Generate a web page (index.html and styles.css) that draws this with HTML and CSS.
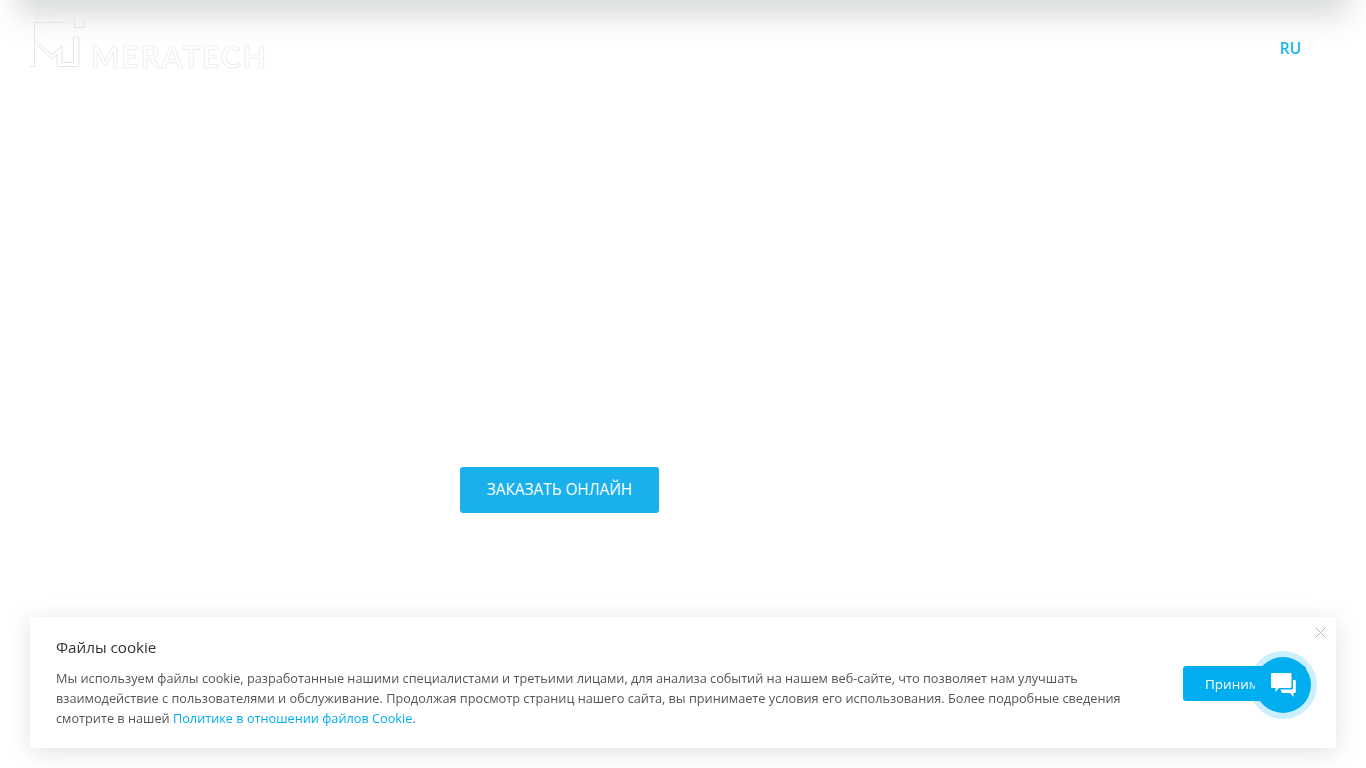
FILE: index.html
```html
<!DOCTYPE html>
<html lang="ru">
<head>
    <meta charset="UTF-8">
    <meta name="viewport" content="width=device-width, initial-scale=1.0">
    <title>Meratech</title>
    <link rel="stylesheet" href="styles.css">
</head>
<body>

    <div class="top-shadow"></div>

    <header class="header">
        <a class="logo" href="#">
            <svg class="logo-mark" width="56" height="50" viewBox="0 0 56 50" fill="none" stroke="#e4e4e4" stroke-width="1">
                <path d="M0 48.500H4.500V4.500H36"/>
                <path d="M44.500 1V9.500H54.500V1"/>
                <path d="M7 27L22 41L27 36V48.500H49V19H43.500V44.500H32V28L22 37L7 24"/>
            </svg>
            <span class="logo-text">MERATECH</span>
        </a>
        <a class="lang" href="#">RU</a>
    </header>

    <main class="hero">
        <a class="order-btn" href="#">ЗАКАЗАТЬ ОНЛАЙН</a>
    </main>

    <div class="cookie">
        <button class="cookie-close" aria-label="Закрыть">
            <svg width="11" height="11" viewBox="0 0 11 11" stroke="#b5b5b5" stroke-width="1"><path d="M0.5 0.5L10.5 10.5M10.5 0.5L0.5 10.5"/></svg>
        </button>
        <div class="cookie-body">
            <div class="cookie-title">Файлы cookie</div>
            <p class="cookie-text">Мы используем файлы cookie, разработанные нашими специалистами и третьими лицами, для анализа событий на нашем веб-сайте, что позволяет нам улучшать взаимодействие с пользователями и обслуживание. Продолжая просмотр страниц нашего сайта, вы принимаете условия его использования. Более подробные сведения смотрите в нашей <a href="#">Политике в отношении файлов Cookie</a>.</p>
        </div>
        <button class="cookie-accept">Принимаю</button>
    </div>

    <button class="chat" aria-label="Чат">
        <svg width="26" height="26" viewBox="0 0 26 26" fill="#fff">
            <path d="M2.500 1H20C21 1 21.500 1.500 21.500 2.500V14.500C21.500 15.500 21 16 20 16H9L5.500 20V16H2.500C1.500 16 1 15.500 1 14.500V2.500C1 1.500 1.500 1 2.500 1Z"/>
            <path d="M23 8H24.500C25.300 8 25.800 8.500 25.800 9.300V19.700C25.800 20.500 25.300 21 24.500 21H23.500V25L20 21H12L10.500 17.500H21.500C22.500 17.500 23 17 23 16Z"/>
        </svg>
    </button>

</body>
</html>
```

FILE: styles.css
```css
html, body {
    height: 100%;
}

body {
    margin: 0;
    overflow: hidden;
    font-family: 'Open Sans', 'Noto Sans', sans-serif;
    background-color: #fff;
    color: #333;
}

a {
    text-decoration: none;
}

.top-shadow {
    position: absolute;
    top: -20px;
    left: 30px;
    right: 30px;
    height: 20px;
    box-shadow: 0 3px 30px 12px rgba(70, 82, 88, 0.22);
}

.header {
    display: flex;
    justify-content: space-between;
    align-items: flex-start;
    position: relative;
    height: 96px;
    padding: 18px 65px 0 30px;
    box-sizing: border-box;
}

.logo {
    display: flex;
    align-items: flex-end;
    gap: 5px;
    height: 50px;
}

.logo-mark {
    display: block;
}

.logo-text {
    font-family: 'Lato', sans-serif;
    font-size: 30px;
    font-weight: 700;
    line-height: 22px;
    letter-spacing: 1.9px;
    padding-bottom: 1px;
    color: #fff;
    -webkit-text-stroke: 0.6px #e6e6e6;
}

.lang {
    margin-top: 19px;
    font-size: 15.5px;
    font-weight: 600;
    line-height: 22px;
    color: #16b4f5;
}

.hero {
    padding: 371px 0 0 460px;
}

.order-btn {
    display: inline-block;
    width: 199px;
    height: 46px;
    line-height: 45px;
    text-align: center;
    background-color: #1ab0ec;
    color: #fff;
    font-size: 15.36px;
    border-radius: 3px;
}

.cookie {
    position: fixed;
    left: 30px;
    right: 30px;
    bottom: 20px;
    height: 131px;
    display: flex;
    justify-content: space-between;
    align-items: flex-start;
    padding: 0 30px 0 26px;
    box-sizing: border-box;
    background-color: #fff;
    border-radius: 3px;
    box-shadow: 0 4px 24px rgba(0, 0, 0, 0.12);
}

.cookie-body {
    width: 1075px;
    padding-top: 19px;
}

.cookie-title {
    font-size: 15.2px;
    line-height: 22px;
    color: #333;
}

.cookie-text {
    margin: 10px 0 0;
    font-size: 12.72px;
    line-height: 20px;
    color: #555;
}

.cookie-text a {
    color: #00aeef;
}

.cookie-accept {
    width: 123px;
    height: 35px;
    margin-top: 49px;
    border: none;
    border-radius: 3px;
    padding: 0 0 0 22px;
    text-align: left;
    background-color: #00aeef;
    color: #fff;
    font-family: inherit;
    font-size: 13.5px;
}

.cookie-close {
    position: absolute;
    top: 10px;
    right: 10px;
    padding: 0;
    border: none;
    background: none;
    line-height: 0;
}

.chat {
    position: fixed;
    right: 55px;
    bottom: 55px;
    display: flex;
    align-items: center;
    justify-content: center;
    width: 56px;
    height: 56px;
    padding: 0;
    border: none;
    border-radius: 50%;
    background-color: #00aeef;
    box-shadow: 0 0 0 6px rgba(0, 174, 255, 0.2);
}
```
